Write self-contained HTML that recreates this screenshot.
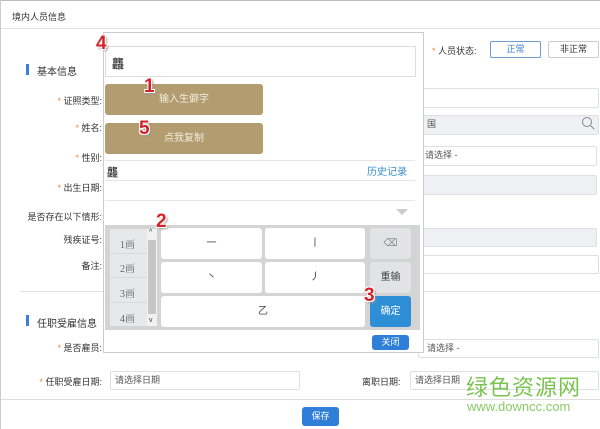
<!DOCTYPE html>
<html><head><meta charset="utf-8"><style>
*{margin:0;padding:0;box-sizing:border-box}
body{width:600px;height:429px;background:#fff;position:relative;overflow:hidden;font-family:"Liberation Sans","Noto Sans CJK SC",sans-serif;font-size:9px;color:#333}
.a{position:absolute}
.lbl{position:absolute;right:498px;white-space:nowrap;font-size:9px;color:#333}
.st{color:#e8883a}
.in{position:absolute;border:1px solid #dde1e6;border-radius:2px;background:#fff;font-size:9px;color:#555;padding-left:4px;line-height:17px}
.g{background:#eef0f3}
.key{position:absolute;background:#fff;border-radius:3px;text-align:center;font-size:10px;color:#444}
.num{position:absolute;color:#d2232a;font-weight:bold;font-size:19px;text-shadow:1px 1px 0 #fff,-1px -1px 0 #fff,1px -1px 0 #fff,-1px 1px 0 #fff,2px 2px 2px #999;font-family:"Liberation Sans",sans-serif}
.btn{position:absolute;background:#b29c70;border-radius:3px;color:#f3ecdd;text-align:center;font-size:10px;line-height:31px}
</style></head><body>
<div class="a" style="left:0;top:0;width:600px;height:1px;background:#bbb"></div>
<div class="a" style="left:0;top:0;width:1px;height:429px;background:#ccc"></div>
<div class="a" style="left:12px;top:10px;font-size:9px">境内人员信息</div>
<div class="a" style="left:1px;top:28px;width:599px;height:1px;background:#e3e3e3"></div>

<div class="a" style="left:26px;top:64px;width:3px;height:11px;background:#3c7ed8"></div>
<div class="a" style="left:37px;top:63px;font-size:10px">基本信息</div>
<div class="lbl" style="top:94px"><span class="st">* </span>证照类型:</div>
<div class="lbl" style="top:121px"><span class="st">* </span>姓名:</div>
<div class="lbl" style="top:151px"><span class="st">* </span>性别:</div>
<div class="lbl" style="top:181px"><span class="st">* </span>出生日期:</div>
<div class="lbl" style="top:210px">是否存在以下情形:</div>
<div class="lbl" style="top:233px">残疾证号:</div>
<div class="lbl" style="top:259px">备注:</div>
<div class="a" style="left:20px;top:291px;width:580px;height:1px;background:#e3e3e3"></div>
<div class="a" style="left:26px;top:315px;width:3px;height:11px;background:#3c7ed8"></div>
<div class="a" style="left:37px;top:315px;font-size:10px">任职受雇信息</div>
<div class="lbl" style="top:341px"><span class="st">* </span>是否雇员:</div>
<div class="lbl" style="top:375px"><span class="st">* </span>任职受雇日期:</div>
<div class="in" style="left:110px;top:371px;width:190px;height:19px">请选择日期</div>
<div class="a" style="left:362px;top:375px">离职日期:</div>
<div class="in" style="left:410px;top:371px;width:189px;height:19px">请选择日期</div>
<div class="a" style="left:1px;top:399px;width:599px;height:1px;background:#ddd"></div>
<div class="a" style="left:302px;top:407px;width:37px;height:19px;background:#2f7fd9;border-radius:3px;color:#fff;text-align:center;line-height:19px">保存</div>

<div class="a" style="left:432px;top:44px"><span class="st">* </span>人员状态:</div>
<div class="a" style="left:490px;top:41px;width:51px;height:17px;border:1px solid #6c9bd0;border-radius:2px;text-align:center;line-height:15px;color:#3b7fd4">正常</div>
<div class="a" style="left:548px;top:41px;width:51px;height:17px;border:1px solid #ccc;border-radius:2px;text-align:center;line-height:15px">非正常</div>
<div class="in" style="left:418px;top:88px;width:181px;height:20px"></div>
<div class="in g" style="left:418px;top:115px;width:181px;height:20px;padding-left:8px">国</div>
<div class="a" style="left:582px;top:117px;width:10px;height:10px;border:1px solid #888;border-radius:50%"></div>
<div class="a" style="left:590px;top:127px;width:5px;height:1px;background:#888;transform:rotate(45deg)"></div>
<div class="in" style="left:418px;top:146px;width:179px;height:20px;padding-left:6px">请选择 -</div>
<div class="in g" style="left:418px;top:175px;width:179px;height:20px"></div>
<div class="in g" style="left:418px;top:228px;width:179px;height:19px"></div>
<div class="in" style="left:418px;top:255px;width:181px;height:19px"></div>
<div class="in" style="left:418px;top:339px;width:181px;height:19px;padding-left:8px">请选择 -</div>

<div class="a" style="left:466px;top:370px;font-size:22px;color:#7cc450;letter-spacing:1px">绿色资源网</div>
<div class="a" style="left:467px;top:399px;font-size:13px;color:#8acb66">www.downcc.com</div>

<!-- popup -->
<div class="a" style="left:103px;top:32px;width:321px;height:321px;background:#fff;border:1px solid #ccc"></div>
<div class="a" style="left:105px;top:46px;width:311px;height:31px;border:1px solid #ddd"></div>
<div class="a" style="left:112px;top:55px;font-size:12px;font-weight:bold">龘</div>
<div class="btn" style="left:105px;top:84px;width:158px;height:31px">输入生僻字</div>
<div class="btn" style="left:105px;top:123px;width:158px;height:31px">点我复制</div>
<div class="a" style="left:105px;top:160px;width:310px;height:1px;background:#e6e6e6"></div>
<div class="a" style="left:107px;top:164px;font-size:11px;font-weight:bold">龘</div>
<div class="a" style="left:367px;top:163px;font-size:10px;color:#3a8fc8">历史记录</div>
<div class="a" style="left:105px;top:180px;width:310px;height:1px;background:#e6e6e6"></div>
<div class="a" style="left:105px;top:200px;width:310px;height:1px;background:#e6e6e6"></div>
<div class="a" style="left:396px;top:209px;width:0;height:0;border-left:6px solid transparent;border-right:6px solid transparent;border-top:6px solid #ccc"></div>
<div class="a" style="left:105px;top:225px;width:315px;height:105px;background:#d4d4d4"></div>
<div class="a" style="left:110px;top:229px;width:37px;height:97px;background:#e6e8ec"></div>
<div class="a" style="left:120px;top:236px;font-family:'Liberation Serif','Noto Serif CJK SC',serif;font-size:10px;color:#666">1画</div>
<div class="a" style="left:120px;top:260px;font-family:'Liberation Serif','Noto Serif CJK SC',serif;font-size:10px;color:#666">2画</div>
<div class="a" style="left:120px;top:285px;font-family:'Liberation Serif','Noto Serif CJK SC',serif;font-size:10px;color:#666">3画</div>
<div class="a" style="left:120px;top:310px;font-family:'Liberation Serif','Noto Serif CJK SC',serif;font-size:10px;color:#666">4画</div>
<div class="a" style="left:110px;top:253px;width:37px;height:1px;background:#d8dadd"></div>
<div class="a" style="left:110px;top:277px;width:37px;height:1px;background:#d8dadd"></div>
<div class="a" style="left:110px;top:302px;width:37px;height:1px;background:#d8dadd"></div>
<div class="a" style="left:147px;top:229px;width:10px;height:97px;background:#f2f2f2"></div>
<div class="a" style="left:148px;top:240px;width:8px;height:74px;background:#c6c6c6"></div>
<div class="a" style="left:149px;top:229px;font-size:7px">^</div>
<div class="a" style="left:149px;top:317px;font-size:7px">v</div>
<div class="key" style="left:161px;top:228px;width:101px;height:31px;line-height:31px">一</div>
<div class="key" style="left:265px;top:228px;width:100px;height:31px;line-height:31px">丨</div>
<div class="key" style="left:370px;top:228px;width:41px;height:31px;line-height:31px;background:#e2e3e6;color:#888">⌫</div>
<div class="key" style="left:161px;top:262px;width:101px;height:31px;line-height:31px">丶</div>
<div class="key" style="left:265px;top:262px;width:100px;height:31px;line-height:31px">丿</div>
<div class="key" style="left:370px;top:262px;width:41px;height:31px;line-height:31px;background:#e2e3e6">重输</div>
<div class="key" style="left:161px;top:296px;width:204px;height:31px;line-height:31px">乙</div>
<div class="key" style="left:370px;top:296px;width:41px;height:31px;line-height:31px;background:#2e8fd6;color:#fff">确定</div>
<div class="a" style="left:372px;top:335px;width:37px;height:15px;background:#2f7fd9;border-radius:3px;color:#fff;text-align:center;line-height:15px">关闭</div>

<div class="num" style="left:96px;top:33px">4</div>
<div class="num" style="left:144px;top:76px">1</div>
<div class="num" style="left:139px;top:118px">5</div>
<div class="num" style="left:156px;top:211px">2</div>
<div class="num" style="left:364px;top:285px">3</div>
</body></html>
